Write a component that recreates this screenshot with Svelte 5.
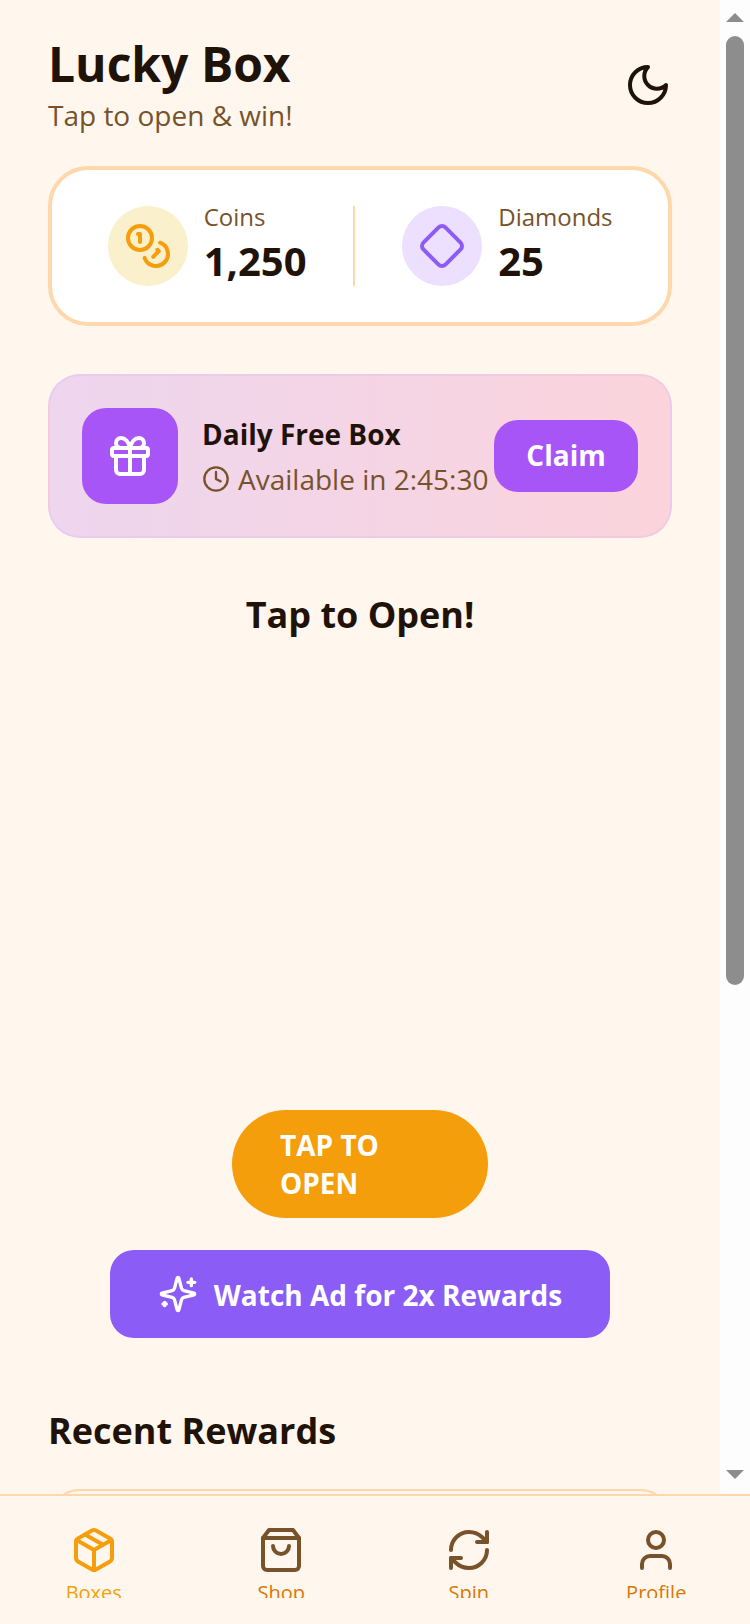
<script>
  const tabs = [
    { name: 'Boxes', active: true, paths: ['m7.5 4.27 9 5.15', 'M21 8a2 2 0 0 0-1-1.73l-7-4a2 2 0 0 0-2 0l-7 4A2 2 0 0 0 3 8v8a2 2 0 0 0 1 1.73l7 4a2 2 0 0 0 2 0l7-4A2 2 0 0 0 21 16Z', 'm3.3 7 8.7 5 8.7-5', 'M12 22V12'] },
    { name: 'Shop', paths: ['M6 2 3 6v14a2 2 0 0 0 2 2h14a2 2 0 0 0 2-2V6l-3-4Z', 'M3 6h18', 'M16 10a4 4 0 0 1-8 0'] },
    { name: 'Spin', paths: ['M3 12a9 9 0 0 1 9-9 9.75 9.75 0 0 1 6.74 2.74L21 8', 'M21 3v5h-5', 'M21 12a9 9 0 0 1-9 9 9.75 9.75 0 0 1-6.74-2.74L3 16', 'M8 16H3v5'] },
    { name: 'Profile', paths: ['M19 21v-2a4 4 0 0 0-4-4H9a4 4 0 0 0-4 4v2', 'M16 7a4 4 0 1 1-8 0 4 4 0 0 1 8 0Z'] }
  ];
</script>

<div class="app">
  <div class="viewport">
    <main class="scroll">
      <header class="top">
        <div>
          <h1>Lucky Box</h1>
          <p class="sub">Tap to open &amp; win!</p>
        </div>
        <svg class="moon icon" viewBox="0 0 24 24"><path d="M12 3a6 6 0 0 0 9 9 9 9 0 1 1-9-9Z" /></svg>
      </header>

      <section class="stats">
        <div class="stat">
          <div class="bubble gold">
            <svg class="icon" viewBox="0 0 24 24">
              <circle cx="8" cy="8" r="6" />
              <path d="M18.09 10.37A6 6 0 1 1 10.34 18" />
              <path d="M7 6h1v4" />
              <path d="m16.71 13.88.7.71-2.82 2.82" />
            </svg>
          </div>
          <div>
            <div class="label">Coins</div>
            <div class="value">1,250</div>
          </div>
        </div>
        <div class="divider"></div>
        <div class="stat">
          <div class="bubble violet">
            <svg class="icon" viewBox="0 0 24 24">
              <path d="M2.7 10.3a2.41 2.41 0 0 0 0 3.41l7.59 7.59a2.41 2.41 0 0 0 3.41 0l7.59-7.59a2.41 2.41 0 0 0 0-3.41l-7.59-7.59a2.41 2.41 0 0 0-3.41 0Z" />
            </svg>
          </div>
          <div>
            <div class="label">Diamonds</div>
            <div class="value">25</div>
          </div>
        </div>
      </section>

      <section class="daily">
        <div class="tile">
          <svg class="icon" viewBox="0 0 24 24">
            <rect x="3" y="8" width="18" height="4" rx="1" />
            <path d="M12 8v13" />
            <path d="M19 12v7a2 2 0 0 1-2 2H7a2 2 0 0 1-2-2v-7" />
            <path d="M7.5 8a2.5 2.5 0 0 1 0-5A4.8 8 0 0 1 12 8a4.8 8 0 0 1 4.5-5 2.5 2.5 0 0 1 0 5" />
          </svg>
        </div>
        <div class="daily-text">
          <div class="daily-title">Daily Free Box</div>
          <div class="daily-time">
            <svg class="icon" viewBox="0 0 24 24"><circle cx="12" cy="12" r="10" /><path d="M12 6v6l4 2" /></svg>
            <span>Available in 2:45:30</span>
          </div>
        </div>
        <button class="claim">Claim</button>
      </section>

      <section class="open">
        <h2>Tap to Open!</h2>
        <div class="box-space"></div>
        <button class="tap">TAP TO OPEN</button>
        <button class="watch">
          <svg class="icon" viewBox="0 0 24 24">
            <path d="M9.937 15.5A2 2 0 0 0 8.5 14.063l-6.135-1.582a.5.5 0 0 1 0-.962L8.5 9.936A2 2 0 0 0 9.937 8.5l1.582-6.135a.5.5 0 0 1 .963 0L14.063 8.5A2 2 0 0 0 15.5 9.937l6.135 1.581a.5.5 0 0 1 0 .964L15.5 14.063a2 2 0 0 0-1.437 1.437l-1.582 6.135a.5.5 0 0 1-.963 0z" />
            <path d="M20 3v4" /><path d="M22 5h-4" /><path d="M4 17v2" /><path d="M5 18H3" />
          </svg>
          <span>Watch Ad for 2x Rewards</span>
        </button>
      </section>

      <section class="recent">
        <h3>Recent Rewards</h3>
        <div class="recent-card"></div>
      </section>
    </main>

    <div class="scrollbar" aria-hidden="true">
      <span class="arrow up"></span>
      <span class="thumb"></span>
      <span class="arrow down"></span>
    </div>
  </div>

  <nav class="tabs">
    {#each tabs as tab}
      <div class="tab" class:active={tab.active}>
        <svg class="icon" viewBox="0 0 24 24">
          {#each tab.paths as d}<path {d} />{/each}
        </svg>
        <span>{tab.name}</span>
      </div>
    {/each}
  </nav>
</div>

<style>
  :global(body) { margin: 0; background: #fff7ed; }
  .app { width: 750px; height: 1624px; display: flex; flex-direction: column; overflow: hidden; background: #fff7ed; color: #1f1208; font-family: "Open Sans", sans-serif; }
  .viewport { flex: 1; min-height: 0; display: flex; }
  .scroll { flex: 1; min-width: 0; overflow-y: auto; padding: 0 48px; box-sizing: border-box; }

  .scrollbar { width: 30px; flex-shrink: 0; background: #fdfdfd; display: flex; flex-direction: column; align-items: center; }
  .arrow { width: 0; height: 0; border-left: 9px solid transparent; border-right: 9px solid transparent; }
  .arrow.up { margin-top: 13px; border-bottom: 9px solid #8d8d8d; }
  .arrow.down { margin-top: auto; margin-bottom: 15px; border-top: 9px solid #8d8d8d; }
  .thumb { width: 18px; height: 949px; margin-top: 14px; background: #8d8d8d; border-radius: 9px; }

  .icon { fill: none; stroke: currentColor; stroke-width: 2; stroke-linecap: round; stroke-linejoin: round; display: block; flex-shrink: 0; }

  .top { display: flex; justify-content: space-between; align-items: center; padding-top: 32px; margin-bottom: 32px; }
  h1 { margin: 0; font-size: 48px; line-height: 64px; font-weight: 700; }
  .sub { margin: 0; font-size: 28px; line-height: 38px; color: #78522b; }
  .moon { width: 48px; height: 48px; margin-top: 3px; color: #1f1208; }

  .stats { display: flex; justify-content: space-around; align-items: center; padding: 32px 32px 32px 32.25px; background: #fff; border: 4px solid #fed7aa; border-radius: 40px; }
  .stat { display: flex; align-items: center; gap: 16px; }
  .bubble { width: 80px; height: 80px; border-radius: 50%; display: flex; align-items: center; justify-content: center; }
  .bubble .icon { width: 48px; height: 48px; }
  .gold { background: #fbf0cc; color: #f59e0b; }
  .violet { background: #ede0fe; color: #8b5cf6; }
  .label { font-size: 24px; line-height: 30px; color: #78522b; }
  .value { font-size: 40px; line-height: 58px; font-weight: 700; }
  .divider { width: 2px; height: 80px; background: #fed7aa; }

  .daily { display: flex; align-items: center; gap: 24px; margin-top: 48px; padding: 32px; background: linear-gradient(90deg, rgba(168, 85, 247, 0.2), rgba(236, 72, 153, 0.2)); border: 2px solid rgba(168, 85, 247, 0.08); border-radius: 32px; }
  .tile { width: 96px; height: 96px; border-radius: 24px; background: #a855f7; color: #fff; display: flex; align-items: center; justify-content: center; flex-shrink: 0; }
  .tile .icon { width: 48px; height: 48px; }
  .daily-text { flex: 1; white-space: nowrap; min-width: 0; }
  .daily-title { font-size: 28px; line-height: 40px; font-weight: 700; }
  .daily-time { display: flex; align-items: center; gap: 8px; margin-top: 5px; font-size: 28px; line-height: 40px; color: #78522b; }
  .daily-time .icon { width: 28px; height: 28px; }
  .claim { min-width: 144px; height: 72px; padding: 0 32px 2px; border: 0; border-radius: 24px; background: #a855f7; color: #fff; font: 700 28px "Open Sans", sans-serif; flex-shrink: 0; }

  .open { display: flex; flex-direction: column; align-items: center; margin-top: 48px; }
  h2 { margin: 0; font-size: 36px; line-height: 58px; font-weight: 700; }
  .box-space { height: 466px; }
  .tap { width: 256px; height: 108px; padding: 0 48px; border: 0; border-radius: 54px; background: #f59e0b; color: #fff; font: 700 28px/38px "Open Sans", sans-serif; text-align: left; }
  .watch { display: flex; align-items: center; justify-content: center; gap: 16px; width: 500px; height: 88px; margin-top: 32px; border: 0; border-radius: 24px; background: #8b5cf6; color: #fff; font: 700 28px "Open Sans", sans-serif; }
  .watch span { padding-top: 2px; }
  .watch .icon { width: 40px; height: 40px; }

  .recent { margin-top: 68px; }
  h3 { margin: 0 0 33px; font-size: 36px; line-height: 50px; font-weight: 700; }
  .recent-card { height: 770px; border: 2px solid #fed7aa; border-radius: 32px; margin-bottom: 48px; }

  .tabs { height: 130px; flex-shrink: 0; box-sizing: border-box; display: grid; grid-template-columns: repeat(4, 1fr); border-top: 2px solid #fed7aa; background: #fff7ed; }
  .tab { height: 102px; overflow: hidden; display: flex; flex-direction: column; align-items: center; padding-top: 30px; box-sizing: border-box; color: #78522b; }
  .tab .icon { width: 48px; height: 48px; }
  .tab span { font-size: 20px; line-height: 28px; margin-top: 5px; color: #d97706; }
  .tab.active { color: #f59e0b; }
  .tab.active span { color: #f59e0b; }
</style>
